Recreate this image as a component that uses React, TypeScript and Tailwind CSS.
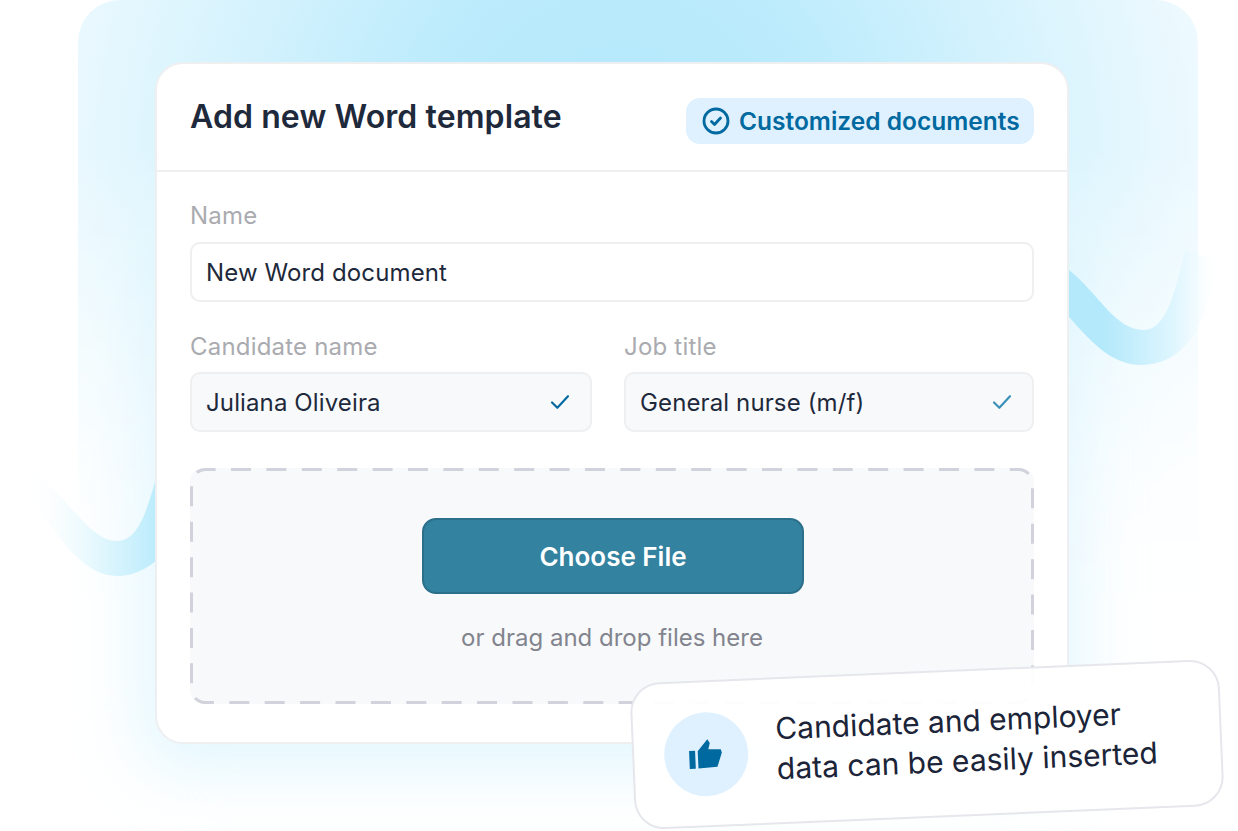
export default function App() {
  return (
    <div className="relative w-[1238px] h-[831px] overflow-hidden bg-white pt-[62px] pl-[155px] font-['Inter',sans-serif]">
      <svg className="absolute left-0 top-0" width="1238" height="831" viewBox="0 0 1238 831" fill="none">
        <defs>
          <radialGradient id="bg" gradientUnits="userSpaceOnUse" cx="0" cy="0" r="1" gradientTransform="translate(620 150) scale(660 640)">
            <stop offset="0" stopColor="#b2e8fb" />
            <stop offset="0.3" stopColor="#bbebfc" />
            <stop offset="0.82" stopColor="#e8f8fe" />
            <stop offset="1" stopColor="#f6fcff" />
          </radialGradient>
          <linearGradient id="fade" gradientUnits="userSpaceOnUse" x1="0" y1="150" x2="0" y2="620">
            <stop offset="0" stopColor="#fff" />
            <stop offset="1" stopColor="#000" />
          </linearGradient>
          <mask id="m">
            <rect x="0" y="0" width="1238" height="831" fill="url(#fade)" />
          </mask>
          <filter id="blur" x="-20%" y="-20%" width="140%" height="140%">
            <feGaussianBlur stdDeviation="32" />
          </filter>
          <linearGradient id="wr" gradientUnits="userSpaceOnUse" x1="1105" y1="0" x2="1222" y2="0">
            <stop offset="0" stopColor="#b4e9fb" />
            <stop offset="0.6" stopColor="#e0f6fe" />
            <stop offset="1" stopColor="#ffffff" stopOpacity="0" />
          </linearGradient>
          <linearGradient id="wl" gradientUnits="userSpaceOnUse" x1="22" y1="0" x2="155" y2="0">
            <stop offset="0" stopColor="#ffffff" stopOpacity="0" />
            <stop offset="0.5" stopColor="#e9f9fe" />
            <stop offset="1" stopColor="#bdecfc" />
          </linearGradient>
        </defs>
        <rect x="140" y="220" width="940" height="550" rx="40" fill="#c6effd" opacity="0.5" filter="url(#blur)" />
        <rect x="78" y="0" width="1120" height="700" rx="42" fill="url(#bg)" mask="url(#m)" />
        <path d="M1069 270C1100 295 1115 330 1144 330C1165 330 1175 295 1185 250L1216 260C1210 330 1180 365 1142 365C1110 365 1090 340 1069 317Z" fill="url(#wr)" />
        <path d="M24 470C60 480 85 541 117 541C140 541 148 505 157 475L157 560C145 570 132 576 117 576C80 576 55 530 24 490Z" fill="url(#wl)" />
      </svg>

      <div className="relative w-[914px] h-[682px] bg-white border-2 border-[#eeeff1] rounded-[28px] flex flex-col">
        <header className="h-[108px] shrink-0 border-b-2 border-[#eeeff1] pl-[33px] pr-[33px] flex justify-between">
          <h1 className="mt-[33px] text-[32px] leading-[40px] font-semibold tracking-[0.1px] text-[#1e293b]">Add new Word template</h1>
          <div className="mt-[34px] h-[46px] w-[348px] rounded-[14px] bg-[#dff1fe] flex items-center pl-[16px] gap-[9px] text-[24.5px] font-semibold text-[#0069a0]">
            <svg width="28" height="28" viewBox="0 0 28 28" fill="none" stroke="#0069a0" strokeWidth="2.8" strokeLinecap="round" strokeLinejoin="round">
              <circle cx="14" cy="14" r="12" />
              <path d="M9.5 14.5l3 3 6-6.5" />
            </svg>
            <span>Customized documents</span>
          </div>
        </header>

        <div className="px-[33px] pt-[29px] flex flex-col">
          <label className="text-[24px] leading-[30px] tracking-[0.2px] text-[#aaabb0]">Name</label>
          <div className="mt-[11px] h-[60px] rounded-[10px] border-2 border-[#eeeff1] flex items-center pl-[14px] pt-[2px] text-[24px] tracking-[0.12px] text-[#1e293b]">New Word document</div>

          <div className="mt-[30px] grid grid-cols-[402px_410px] gap-x-[32px]">
            <div className="flex flex-col">
              <label className="text-[24px] leading-[30px] tracking-[0.2px] text-[#aaabb0]">Candidate name</label>
              <div className="mt-[10px] h-[60px] rounded-[10px] border-2 border-[#eeeff1] bg-[#f8f9fb] flex items-center justify-between pl-[14px] pr-[20px] text-[24px] tracking-[0.12px] text-[#1e293b]">
                <span className="pt-[2px]">Juliana Oliveira</span>
                <svg width="20" height="16" viewBox="0 0 22 18" fill="none" stroke="#0069a0" strokeWidth="2.4" strokeLinecap="round" strokeLinejoin="round"><path d="M2 9.5l6 6L20 2.5" /></svg>
              </div>
            </div>
            <div className="flex flex-col">
              <label className="text-[24px] leading-[30px] tracking-[0.2px] text-[#aaabb0]">Job title</label>
              <div className="mt-[10px] h-[60px] rounded-[10px] border-2 border-[#eeeff1] bg-[#f8f9fb] flex items-center justify-between pl-[14px] pr-[20px] text-[24px] tracking-[0.12px] text-[#1e293b]">
                <span className="pt-[2px]">General nurse (m/f)</span>
                <svg width="20" height="16" viewBox="0 0 22 18" fill="none" stroke="#3a8fb8" strokeWidth="2.4" strokeLinecap="round" strokeLinejoin="round"><path d="M2 9.5l6 6L20 2.5" /></svg>
              </div>
            </div>
          </div>

          <div className="relative mt-[36px] h-[236px] rounded-[14px] bg-[#f8f9fb] flex flex-col items-center">
            <svg className="absolute left-0 top-0" width="844" height="236" viewBox="0 0 844 236" fill="none">
              <rect x="1.5" y="1.5" width="841" height="233" rx="14" stroke="#d1d2dc" strokeWidth="3" strokeDasharray="20 15.4" strokeDashoffset="-25.5" />
            </svg>
            <button className="relative mt-[50px] ml-[2px] w-[382px] h-[76px] rounded-[14px] bg-[#33829f] border-2 border-[#2b6f8a] text-white text-[26px] font-semibold">Choose File</button>
            <p className="relative mt-[29px] text-[24px] leading-[30px] text-[#82848e]">or drag and drop files here</p>
          </div>
        </div>
      </div>

      <div className="absolute left-[632px] top-[671px] w-[590px] h-[147px] rotate-[-2.4deg] rounded-[30px] border-2 border-[#e6e7ec] bg-white/95 flex items-center pl-[30px] gap-[28px]">
        <div className="w-[84px] h-[84px] rounded-full bg-[#dff1fe] flex items-center justify-center shrink-0">
          <svg className="mr-[2px]" width="38" height="34" viewBox="0 0 38 34" fill="#0069a0">
            <path d="M3 13h6v18H3z" />
            <path d="M11.6 13.6L21.7 2l2.3 4-1.7 6 12.4.7 1 3.3-5 14-19 1z" />
          </svg>
        </div>
        <p className="mb-[6px] text-[30px] leading-[40px] text-[#1b2438]">Candidate and employer<br />data can be easily inserted</p>
      </div>
    </div>
  );
}
